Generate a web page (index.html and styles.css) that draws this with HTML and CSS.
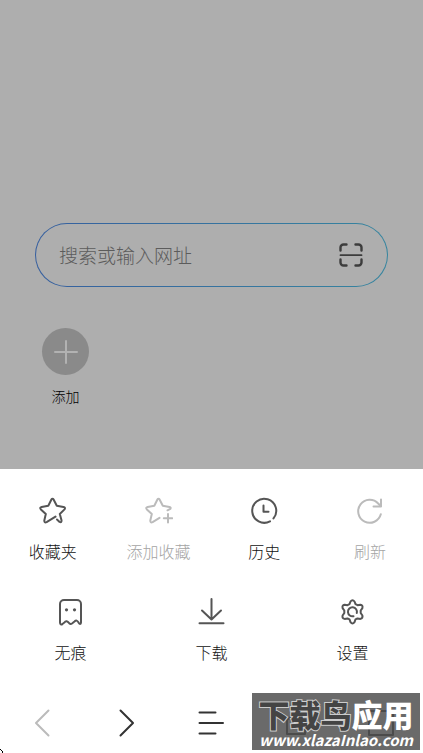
FILE: index.html
```html
<!DOCTYPE html>
<html lang="zh-CN">
<head>
<meta charset="utf-8">
<meta name="viewport" content="width=device-width, initial-scale=1">
<title>浏览器</title>
<link rel="stylesheet" href="styles.css">
</head>
<body>
<main class="home">
  <form class="search">
    <input class="search-input" type="text" placeholder="搜索或输入网址" aria-label="搜索或输入网址">
    <button class="scan" type="button" aria-label="扫一扫">
      <svg viewBox="0 0 24 24" width="24" height="24" fill="none" stroke="#3c3c3c" stroke-width="2.400" stroke-linecap="round" stroke-linejoin="round"><path d="M1.500 7.500V4.500a3 3 0 0 1 3-3H7.500M16.500 1.500h3a3 3 0 0 1 3 3v3M22.500 16.500v3a3 3 0 0 1-3 3h-3M7.500 22.500h-3a3 3 0 0 1-3-3v-3"/><path d="M1.500 12.200h21" stroke-width="1.800"/></svg>
    </button>
  </form>
  <button class="shortcut" type="button">
    <span class="shortcut-icon">
      <svg viewBox="0 0 24 24" width="24" height="24" fill="none" stroke="#b2b2b2" stroke-width="2" stroke-linecap="round"><path d="M12 1v22M1 12h22"/></svg>
    </span>
    <span>添加</span>
  </button>
</main>
<section class="sheet">
  <div class="row">
    <button class="item" type="button">
      <svg class="icon" viewBox="0 0 28 28"><path d="M18 22.500l2.600 2.400Q22.800 25.800 22.500 23.300L20.800 17l4.700-4.600Q26.800 10.500 24.500 9.900L17.800 8.800 14.700 2.700Q13.500 1 12.300 2.700L9.300 8.800 2.600 9.900Q.3 10.500 1.900 12.400L6.800 17 5.300 23.400Q5.200 26.200 7.600 25.100L16.500 19.600"/></svg>
      <span>收藏夹</span>
    </button>
    <button class="item" type="button" disabled>
      <svg class="icon" viewBox="0 0 28 28"><path d="M22.500 13.300L25.300 11.900Q26.300 10.400 24.500 9.900L17.800 8.800 14.700 2.700Q13.500 1 12.300 2.700L9.300 8.800 2.600 9.900Q.3 10.500 1.900 12.400L6.800 17 5.300 23.400Q5.200 26.200 7.600 25.100L14.500 20.800"/><path d="M23 17v8.500M18.800 21.200h8.400"/></svg>
      <span>添加收藏</span>
    </button>
    <button class="item" type="button">
      <svg class="icon" viewBox="0 0 28 28"><path d="M20 24.300A12 12 0 1 1 23.500 21.400"/><path d="M13.500 8.500v6.200h5"/></svg>
      <span>历史</span>
    </button>
    <button class="item" type="button" disabled>
      <svg class="icon" viewBox="0 0 28 28"><path d="M24.800 17.300A11.500 11.500 0 1 1 22.200 6.500L24.600 9"/><path d="M25 2.500v7h-7.500"/></svg>
      <span>刷新</span>
    </button>
  </div>
  <div class="row">
    <button class="item" type="button">
      <svg class="icon" viewBox="0 0 28 28"><path d="M3 24.500V6a4 4 0 0 1 4-4h13a4 4 0 0 1 4 4v18.500c0 2-1.500 1.800-2.300.3-1.300-2.600-2.700-2.800-4.200-1.300l-2.500 2q-1.500 1-2.800-.3c-1.800-2.200-3.400-2.900-4.800-.7l-2 1.500C4.500 27 3 26.500 3 24.500z"/><circle class="dot" cx="9.500" cy="11.800" r="1.600"/><circle class="dot" cx="17.500" cy="11.800" r="1.600"/></svg>
      <span>无痕</span>
    </button>
    <button class="item" type="button">
      <svg class="icon" viewBox="0 0 28 28"><path d="M13.500 1v20M4 12.500l9.500 9 9.500-9M1.500 25.200h24"/></svg>
      <span>下载</span>
    </button>
    <button class="item" type="button">
      <svg class="icon" viewBox="0 0 28 28"><path d="M11.500 3.500q2-2.600 4 0l1 2.700 2 1 2.900-.5q2.700.6 2 3.400l-1.700 2.400v2.500l1.700 2.500q.7 2.700-2 3.400l-2.900-.5-2 1-1 2.800q-2 2.600-4 0l-1-2.800-2-1-2.900.5q-2.700-.7-2-3.400l1.700-2.500v-2.500L3.600 10.100q-.7-2.800 2-3.400l2.900.5 2-1z"/><path d="M14.500 18.200A4.500 4.500 0 1 1 17.800 15"/></svg>
      <span>设置</span>
    </button>
  </div>
</section>
<nav class="nav">
  <button class="nav-button back" type="button" aria-label="后退" disabled><svg viewBox="0 0 28 28"><path d="M20.500 1.500L8 14l12.500 12.500"/></svg></button>
  <button class="nav-button" type="button" aria-label="前进"><svg viewBox="0 0 28 28"><path d="M7.500 1.500L20 14 7.500 26.500"/></svg></button>
  <button class="nav-button" type="button" aria-label="菜单"><svg viewBox="0 0 28 28"><path d="M2.500 3.500H18.500M2.500 14h23.500M2.500 24.500H18.500"/></svg></button>
  <button class="nav-button" type="button" aria-label="主页"><svg viewBox="0 0 28 28"><path d="M5 11l9-8 9 8v14H5z"/></svg></button>
  <button class="nav-button" type="button" aria-label="窗口"><svg viewBox="0 0 28 28"><path d="M2 2h24v24H2z"/></svg></button>
  <svg class="corner" viewBox="0 0 4 4" aria-hidden="true"><path d="M0 0h1v1h1v1h1v2H2V2H1V1H0z"/></svg>
  <div class="watermark">
    <div class="brand"><span class="brand-dark">下载鸟</span>应用</div>
    <div class="site">www.xlazaInlao.com</div>
  </div>
</nav>
</body>
</html>
```
FILE: styles.css
```css
* { box-sizing: border-box; }

body {
  margin: 0;
  min-height: 100vh;
  display: flex;
  flex-direction: column;
  background: #fff;
  color: #111;
  font-family: "Noto Sans CJK SC", sans-serif;
  font-weight: 300;
}

button {
  margin: 0;
  padding: 0;
  border: 0;
  background: none;
  color: inherit;
  font: inherit;
}

.home {
  flex: 1;
  padding: 223px 35px 60px;
  background: #aeaeae;
}

.search {
  display: flex;
  align-items: center;
  height: 64px;
  padding: 0 24px 0 23px;
  border: 1px solid transparent;
  border-radius: 32px;
  background:
    linear-gradient(#aeaeae, #aeaeae) padding-box,
    linear-gradient(90deg, #365f9f, #36859f) border-box;
}

.search-input {
  flex: 1;
  min-width: 0;
  padding: 0 0 2px;
  border: 0;
  outline: 0;
  background: none;
  color: #333;
  font: 300 19px "Noto Sans CJK SC", sans-serif;
}

.search-input::placeholder { color: #5c5c5c; }

.scan {
  display: flex;
}

.shortcut {
  display: flex;
  flex-direction: column;
  align-items: center;
  gap: 11px;
  width: 61px;
  margin-top: 41px;
  color: #000;
  font-size: 14px;
  line-height: 20px;
}

.shortcut-icon {
  display: flex;
  align-items: center;
  justify-content: center;
  width: 47px;
  height: 47px;
  border-radius: 50%;
  background: #8a8a8a;
}

.sheet {
  display: flex;
  flex-direction: column;
  gap: 36px;
  padding: 28px 0 30px;
}

.row { display: flex; }

.item {
  flex: 1;
  display: flex;
  flex-direction: column;
  align-items: center;
  gap: 15px;
  font-size: 16px;
  line-height: 22px;
}

.item:disabled { color: #a4a4a4; }

.icon {
  width: 28px;
  height: 28px;
  fill: none;
  stroke: #555;
  stroke-width: 2;
  stroke-linecap: round;
  stroke-linejoin: round;
}

.item:disabled .icon { stroke: #bbb; }

.icon .dot {
  fill: #555;
  stroke: none;
}

.nav {
  position: relative;
  display: flex;
  height: 60px;
}

.nav-button {
  flex: 1;
  display: flex;
  align-items: center;
  justify-content: center;
}

.nav-button svg {
  width: 28px;
  height: 28px;
  fill: none;
  stroke: #333;
  stroke-width: 2;
  stroke-linecap: round;
  stroke-linejoin: round;
}

.nav-button.back svg { stroke: #bbb; }

.corner {
  position: absolute;
  left: 0;
  bottom: 0;
  width: 4px;
  height: 4px;
}

.watermark {
  position: absolute;
  right: 3px;
  top: 0;
  width: 168px;
  height: 57px;
  padding-top: 5px;
  background: rgba(80, 80, 80, 0.85);
  color: #fff;
  text-align: center;
  white-space: nowrap;
}

.brand {
  font-size: 31px;
  font-weight: 900;
  line-height: 32px;
}

.brand-dark {
  color: #444;
  -webkit-text-stroke: 2px #ccc;
  paint-order: stroke;
}

.site {
  font: italic bold 15px/20px "Noto Sans CJK SC", sans-serif;
}
```
